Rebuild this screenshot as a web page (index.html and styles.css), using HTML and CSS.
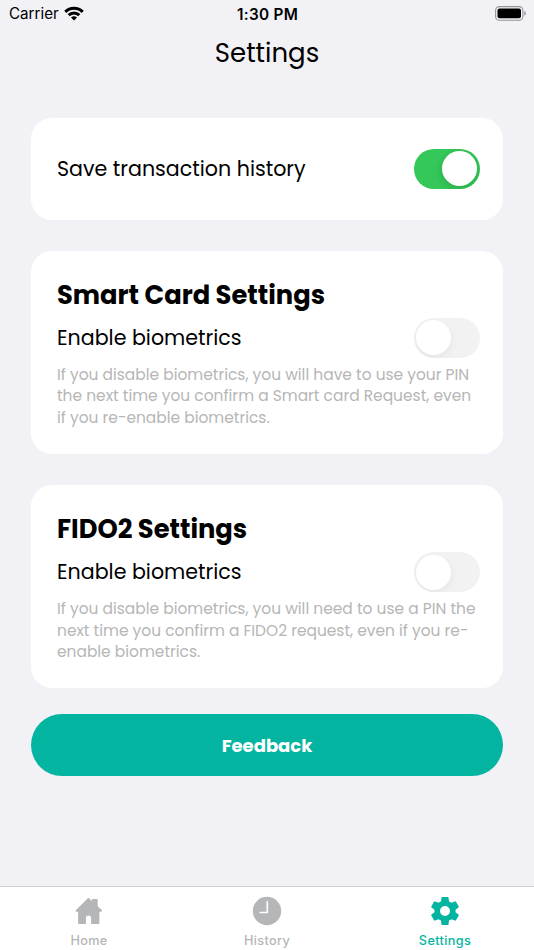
FILE: index.html
```html
<!DOCTYPE html>
<html lang="en">
<head>
<meta charset="utf-8">
<meta name="viewport" content="width=device-width, initial-scale=1">
<title>Settings</title>
<link rel="stylesheet" href="styles.css">
</head>
<body>
<div class="screen">
  <header class="status-bar">
    <div class="carrier"><span>Carrier</span>
      <svg class="wifi" viewBox="0 0 20 15"><path d="M10 14.6 13 11.6A4.3 4.3 0 0 0 7 11.6ZM3.6 8.1 5.8 10.3A6 6 0 0 1 14.2 10.3L16.4 8.1A9.1 9.1 0 0 0 3.6 8.1ZM.2 4.7 2.4 6.9A10.8 10.8 0 0 1 17.6 6.9L19.8 4.7A13.9 13.9 0 0 0 .2 4.7Z"/></svg>
    </div>
    <div class="time">1:30 PM</div>
    <svg class="battery" viewBox="0 0 32 15"><rect x=".6" y=".6" width="27.3" height="13.6" rx="3.8" fill="none" stroke="#949396" stroke-width="1.1"/><rect x="2.5" y="2.5" width="23.5" height="9.8" rx="2"/><path d="M29.3 5.1C31.4 5.7 31.4 9.1 29.3 9.7Z" fill="#949396"/></svg>
  </header>
  <h1 class="title">Settings</h1>
  <main class="content">
    <section class="card card-single">
      <div class="row"><span class="label">Save transaction history</span><span class="toggle on"></span></div>
    </section>
    <section class="card card-group">
      <h2>Smart Card Settings</h2>
      <div class="row"><span class="label">Enable biometrics</span><span class="toggle"></span></div>
      <p>If you disable biometrics, you will have to use your PIN<br>the next time you confirm a Smart card Request, even<br>if you re-enable biometrics.</p>
    </section>
    <section class="card card-group">
      <h2>FIDO2 Settings</h2>
      <div class="row"><span class="label">Enable biometrics</span><span class="toggle"></span></div>
      <p>If you disable biometrics, you will need to use a PIN the<br>next time you confirm a FIDO2 request, even if you re-<br>enable biometrics.</p>
    </section>
    <button class="feedback">Feedback</button>
  </main>
  <nav class="tabs">
    <a class="tab"><svg viewBox="0 0 30 30"><path d="M14.9 2.2 18.1 5V3H23.7V10.2L27.8 14Q28.6 15.5 27 15.8H25.4V27Q25.4 28 24.4 28H17.1V22.3Q17.1 19.4 14.5 19.4T11.9 22.3V28H5.1Q4.1 28 4.1 27V15.8H2.4Q.9 15.4 2 14.1L13.5 2.6Q14.2 1.7 14.9 2.2Z"/></svg><span>Home</span></a>
    <a class="tab"><svg viewBox="0 0 30 30"><circle cx="15" cy="15" r="14.2"/><path d="M15.3 5.3V16.5H7.4" fill="none" stroke="#fff" stroke-width="1.6"/></svg><span>History</span></a>
    <a class="tab active"><svg viewBox="0 0 30 30"><path fill-rule="evenodd" d="M12.3 1H17.7Q18.4 1 18.5 1.7L19 5.4Q20.3 5.9 21.4 6.8L24.9 5.4Q25.6 5.1 26 5.8L28.7 10.4Q29 11 28.5 11.5L25.5 13.8Q25.7 15 25.5 16.3L28.5 18.6Q29 19 28.7 19.6L26 24.3Q25.6 24.9 24.9 24.6L21.4 23.2Q20.3 24.1 19 24.6L18.5 28.4Q18.4 29 17.7 29H12.3Q11.6 29 11.5 28.4L11 24.6Q9.7 24.1 8.6 23.2L5.1 24.6Q4.4 24.9 4 24.3L1.3 19.6Q1 19 1.5 18.6L4.5 16.3Q4.3 15 4.5 13.8L1.5 11.5Q1 11 1.3 10.4L4 5.8Q4.4 5.1 5.1 5.4L8.6 6.8Q9.7 5.9 11 5.4L11.5 1.7Q11.6 1 12.3 1ZM15 10A5 5 0 1 0 15 20A5 5 0 1 0 15 10Z"/></svg><span>Settings</span></a>
  </nav>
</div>
</body>
</html>
```
FILE: styles.css
```css
* { box-sizing: border-box; }
body { margin: 0; background: #f2f1f6; color: #000; font-family: Poppins, Inter, sans-serif; }
.screen { height: 950px; display: flex; flex-direction: column; overflow: hidden; white-space: nowrap; }
.status-bar { height: 28px; flex: none; display: grid; grid-template-columns: 1fr auto 1fr; align-items: center; padding: 0 7px 0 9px; font-family: Inter, sans-serif; font-size: 15.2px; }
.carrier { display: flex; gap: 5.5px; align-items: center; line-height: 28px; }
.wifi { width: 20px; height: 15px; margin-top: -2px; }
.time { font-weight: 600; font-size: 15.3px; letter-spacing: .3px; margin-right: 1px; }
.battery { width: 32px; height: 15px; margin-top: -1px; justify-self: end; }
.title { margin: 5px 0 0; height: 40px; flex: none; line-height: 40px; text-align: center; font-size: 26px; font-weight: 400; }
.content { padding: 45px 31px 0; flex: 1; }
.card { background: #fff; border-radius: 21px; padding: 0 23.5px 0 26px; }
.card-single { height: 101.5px; padding-top: 30.6px; }
.card-group { height: 203px; margin-top: 31.3px; padding-top: 26px; }
.row { display: flex; align-items: center; justify-content: space-between; height: 40px; }
.label { font-size: 20.6px; line-height: 30px; }
.toggle { width: 66px; height: 40px; border-radius: 20px; background: #f2f2f2; display: flex; align-items: center; padding: 0 2.3px; overflow: hidden; }
.toggle::before { content: ""; width: 35px; height: 35px; border-radius: 50%; background: #fff; box-shadow: 0 3px 9px rgba(0,0,0,.06); }
.toggle.on { background: #34c759; justify-content: flex-end; }
.toggle.on::before { box-shadow: 0 3px 9px rgba(0,0,0,.15); }
h2 { margin: 0 0 4px; height: 37px; line-height: 37px; font-size: 25.75px; font-weight: 700; }
p { margin: 6px 0 0; font-size: 15.45px; line-height: 21.6px; color: #b6b6b6; }
.feedback { display: block; width: 100%; height: 62px; margin-top: 26px; padding: 0; border: 0; border-radius: 31px; background: #03b4a0; color: #fff; font: inherit; font-size: 18px; font-weight: 700; }
.tabs { height: 64px; flex: none; border-top: 1px solid #cececf; background: #fff; display: grid; grid-template-columns: repeat(3, 1fr); }
.tab { display: flex; flex-direction: column; align-items: center; padding-top: 9px; color: #b5b6b7; font-family: Inter, sans-serif; font-size: 12.7px; font-weight: 500; letter-spacing: .35px; line-height: 16px; }
.tab svg { width: 30px; height: 30px; fill: currentColor; margin-bottom: 7px; }
.tab.active { color: #03b4a0; }
```
